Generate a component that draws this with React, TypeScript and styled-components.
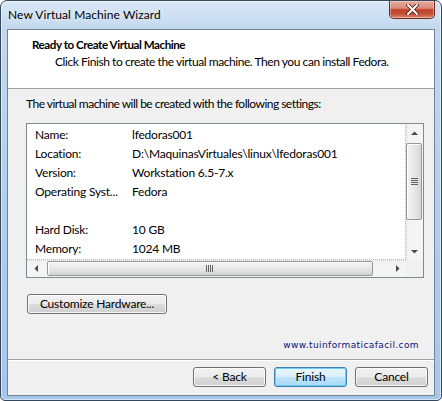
import React from "react";
import styled, { createGlobalStyle } from "styled-components";

const GlobalStyle = createGlobalStyle`
  html, body {
    margin: 0;
    padding: 0;
    background: #ffffff;
  }
  body {
    font-family: "Segoe UI", Lato, "Noto Sans", sans-serif;
    font-size: 12px;
    letter-spacing: -0.2px;
    color: #000;
  }
`;

// Window frame
const Window = styled.div`
  box-sizing: border-box;
  width: 442px;
  height: 401px;
  display: flex;
  flex-direction: column;
  border: 1px solid #34475b;
  border-radius: 7px 7px 5px 5px;
  background: linear-gradient(
    180deg,
    #d9e7f6 0px,
    #c3d8ef 28px,
    #b3ceec 50%,
    #a6c6ea 100%
  );
  box-shadow: inset 0 0 0 1px rgba(255, 255, 255, 0.55);
  overflow: hidden;
`;

const TitleBar = styled.div`
  height: 28px;
  flex: none;
  display: flex;
  justify-content: space-between;
  align-items: flex-start;
  padding-left: 7px;
`;

const Title = styled.div`
  padding-top: 6px;
  line-height: 16px;
  font-size: 12px;
  letter-spacing: 0.07px;
  text-shadow: 0 0 6px rgba(255, 255, 255, 0.9);
`;

const CloseButton = styled.div`
  box-sizing: border-box;
  width: 46px;
  height: 18px;
  margin-right: 6px;
  display: flex;
  align-items: center;
  justify-content: center;
  border: 1px solid #6e2b22;
  border-top: none;
  border-radius: 0 0 5px 5px;
  background: linear-gradient(
    180deg,
    #e6a99a 0%,
    #d88c7b 42%,
    #c0412d 52%,
    #c4533c 78%,
    #de8b70 100%
  );
  box-shadow: inset 0 0 0 1px rgba(255, 255, 255, 0.35);
`;

const Client = styled.div`
  flex: 1;
  margin: 0 6px 4px 6px;
  display: flex;
  flex-direction: column;
  border: 1px solid #70839a;
  background: #f0f0f0;
`;

// Header
const Header = styled.div`
  height: 52px;
  flex: none;
  background: #ffffff;
  border-bottom: 1px solid #a0a0a0;
  padding: 6px 0 0 24px;
  box-sizing: content-box;
  line-height: 17px;
`;

const HeaderTitle = styled.div`
  font-weight: bold;
  font-size: 11.6px;
  letter-spacing: -0.45px;
`;

const HeaderSub = styled.div`
  padding-left: 23px;
  letter-spacing: -0.44px;
`;

// Body
const Body = styled.div`
  flex: 1;
  padding: 7px 10px 0 18px;
  display: flex;
  flex-direction: column;
`;

const Description = styled.div`
  line-height: 16px;
  margin-bottom: 11px;
  letter-spacing: -0.52px;
`;

const ListBox = styled.div`
  box-sizing: border-box;
  width: 398px;
  height: 155px;
  border: 1px solid #828790;
  background: #ffffff;
  display: grid;
  grid-template-columns: 1fr 17px;
  grid-template-rows: 1fr 17px;
`;

const Rows = styled.div`
  position: relative;
  overflow: hidden;
  padding: 1px 0 0 8px;

  &::after {
    content: "";
    position: absolute;
    inset: -1px 0 0 -1px;
    border: 1px dotted #b4b4b4;
  }
`;

const Row = styled.div`
  height: 19px;
  line-height: 19px;
  display: flex;
  white-space: nowrap;
`;

const Label = styled.div`
  width: 97px;
  flex: none;
`;

const Value = styled.div``;

// Scrollbars
const VScroll = styled.div`
  display: flex;
  flex-direction: column;
  background: linear-gradient(90deg, #e3e3e3 0, #f3f3f3 2px, #f5f5f5 100%);
`;

const HScroll = styled.div`
  display: flex;
  background: linear-gradient(180deg, #e3e3e3 0, #f3f3f3 2px, #f5f5f5 100%);
`;

const ArrowBox = styled.div`
  width: 17px;
  height: 17px;
  flex: none;
  display: flex;
  align-items: center;
  justify-content: center;
`;

const Corner = styled.div`
  background: #f0f0f0;
`;

const VThumb = styled.div`
  box-sizing: border-box;
  height: 77px;
  margin: 2px 1px 0 0;
  border: 1px solid #979797;
  border-radius: 2px;
  background: linear-gradient(90deg, #f4f4f4 0%, #e8e8e8 50%, #d6d6d6 100%);
  box-shadow: inset 1px 1px 0 #ffffff;
  display: flex;
  align-items: center;
  justify-content: center;
`;

const HThumb = styled.div`
  box-sizing: border-box;
  width: 326px;
  height: 15px;
  margin: 1px 0 0 3px;
  border: 1px solid #979797;
  border-radius: 2px;
  background: linear-gradient(180deg, #f4f4f4 0%, #e8e8e8 50%, #d2d2d2 100%);
  box-shadow: inset 1px 1px 0 #ffffff;
  display: flex;
  align-items: center;
  justify-content: center;
`;

const Spacer = styled.div`
  flex: 1;
`;

// Buttons
const Button = styled.div<{ $default?: boolean; $width: number }>`
  box-sizing: border-box;
  width: ${(p) => p.$width}px;
  height: 20px;
  flex: none;
  display: flex;
  align-items: center;
  justify-content: center;
  line-height: 16px;
  border: 1px solid ${(p) => (p.$default ? "#3c7fb1" : "#707070")};
  border-radius: 3px;
  background: ${(p) =>
    p.$default
      ? "linear-gradient(180deg, #eaf6fd 0%, #d9f0fc 50%, #bee6fd 51%, #a7d9f5 100%)"
      : "linear-gradient(180deg, #f2f2f2 0%, #ebebeb 50%, #dddddd 51%, #cfcfcf 100%)"};
  box-shadow: inset 0 0 0 1px
    ${(p) => (p.$default ? "#6ecff5" : "rgba(255, 255, 255, 0.8)")};
`;

const CustomizeButton = styled(Button)`
  margin: 16px 0 0 1px;
`;

const Website = styled.div`
  margin: 25px 5px 0 0;
  align-self: flex-end;
  line-height: 12px;
  font-family: "DejaVu Sans", Verdana, sans-serif;
  font-size: 9px;
  letter-spacing: 0.4px;
  color: #11117a;
`;

const Footer = styled.div`
  height: 36px;
  flex: none;
  border-top: 1px solid #a0a0a0;
  box-shadow: inset 0 1px 0 #ffffff;
  box-sizing: border-box;
  padding: 7px 6px 0 0;
  display: flex;
  justify-content: flex-end;
  gap: 8px;
`;

const Arrow = ({ dir }: { dir: "up" | "down" | "left" | "right" }) => {
  const pts = {
    up: "0,4 3.5,0.5 7,4",
    down: "0,0 7,0 3.5,3.5",
    left: "4,0 4,7 0.5,3.5",
    right: "0,0 3.5,3.5 0,7",
  }[dir];
  const horizontal = dir === "left" || dir === "right";
  return (
    <svg
      width={horizontal ? 4 : 7}
      height={horizontal ? 7 : 4}
      viewBox={horizontal ? "0 0 4 7" : "0 0 7 4"}
    >
      <polygon points={pts} fill="#4a4a4a" />
    </svg>
  );
};

const GripV = () => (
  <svg width="7" height="8" viewBox="0 0 7 8">
    {[0, 2, 4, 6].map((y) => (
      <rect key={y} x="0" y={y} width="7" height="1" fill="#606060" />
    ))}
  </svg>
);

const GripH = () => (
  <svg width="8" height="7" viewBox="0 0 8 7">
    {[0, 2, 4, 6].map((x) => (
      <rect key={x} x={x} y="0" width="1" height="7" fill="#606060" />
    ))}
  </svg>
);

const CloseGlyph = () => (
  <svg width="13" height="11" viewBox="0 0 13 11">
    <path
      d="M2 1 L11 10 M11 1 L2 10"
      stroke="#4a1a14"
      strokeWidth="3.6"
      strokeLinecap="round"
    />
    <path
      d="M2 1 L11 10 M11 1 L2 10"
      stroke="#ffffff"
      strokeWidth="2"
      strokeLinecap="round"
    />
  </svg>
);

const settings: [string, string][] = [
  ["Name:", "lfedoras001"],
  ["Location:", "D:\\MaquinasVirtuales\\linux\\lfedoras001"],
  ["Version:", "Workstation 6.5-7.x"],
  ["Operating Syst...", "Fedora"],
  ["", ""],
  ["Hard Disk:", "10 GB"],
  ["Memory:", "1024 MB"],
];

export default function App() {
  return (
    <>
      <GlobalStyle />
      <Window>
        <TitleBar>
          <Title>New Virtual Machine Wizard</Title>
          <CloseButton>
            <CloseGlyph />
          </CloseButton>
        </TitleBar>
        <Client>
          <Header>
            <HeaderTitle>Ready to Create Virtual Machine</HeaderTitle>
            <HeaderSub>
              Click Finish to create the virtual machine. Then you can install
              Fedora.
            </HeaderSub>
          </Header>
          <Body>
            <Description>
              The virtual machine will be created with the following settings:
            </Description>
            <ListBox>
              <Rows>
                {settings.map(([label, value], i) => (
                  <Row key={i}>
                    <Label>{label}</Label>
                    <Value>{value}</Value>
                  </Row>
                ))}
              </Rows>
              <VScroll>
                <ArrowBox>
                  <Arrow dir="up" />
                </ArrowBox>
                <VThumb>
                  <GripV />
                </VThumb>
                <Spacer />
                <ArrowBox>
                  <Arrow dir="down" />
                </ArrowBox>
              </VScroll>
              <HScroll>
                <ArrowBox>
                  <Arrow dir="left" />
                </ArrowBox>
                <HThumb>
                  <GripH />
                </HThumb>
                <Spacer />
                <ArrowBox>
                  <Arrow dir="right" />
                </ArrowBox>
              </HScroll>
              <Corner />
            </ListBox>
            <CustomizeButton $width={140}>Customize Hardware...</CustomizeButton>
            <Website>www.tuinformaticafacil.com</Website>
          </Body>
          <Footer>
            <Button $width={73}>&lt; Back</Button>
            <Button $width={73} $default>
              Finish
            </Button>
            <Button $width={73}>Cancel</Button>
          </Footer>
        </Client>
      </Window>
    </>
  );
}
